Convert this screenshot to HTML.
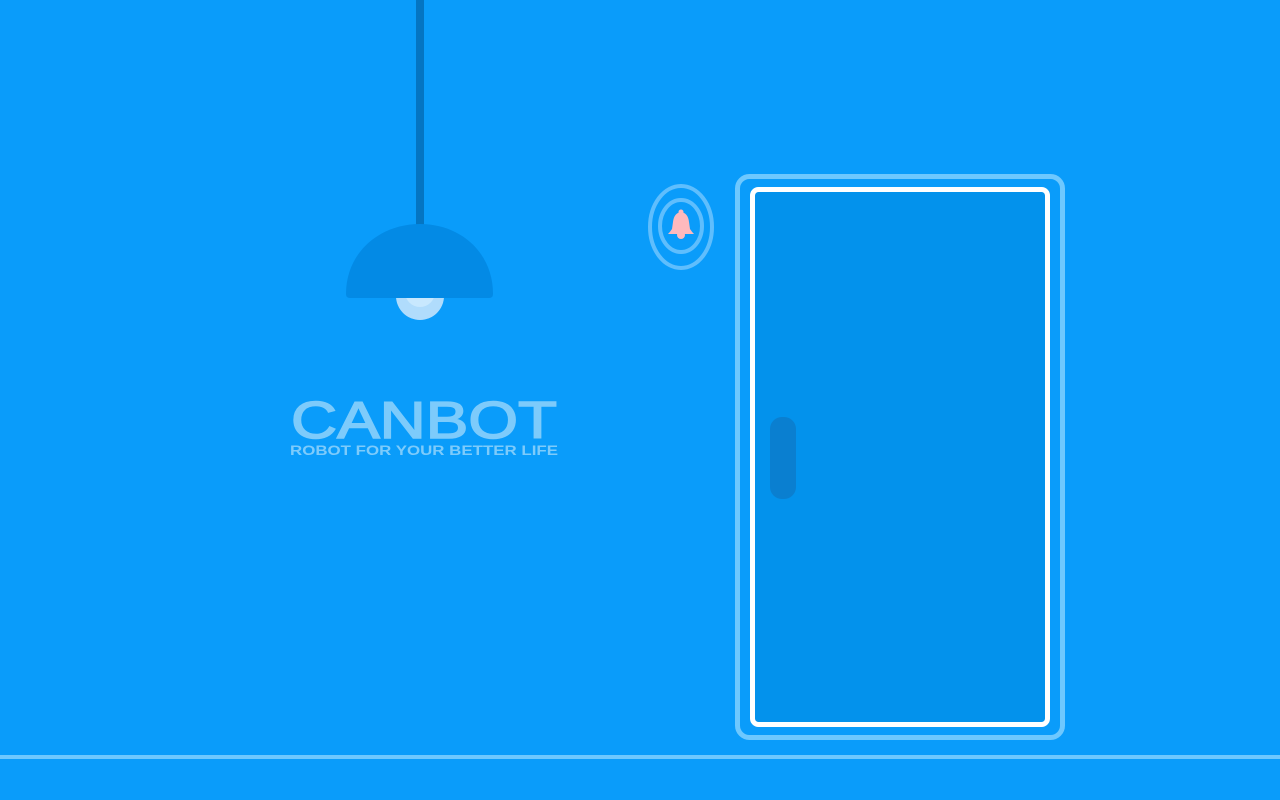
<!DOCTYPE html>
<html><head><meta charset="utf-8"><style>
html,body{margin:0;padding:0;width:1280px;height:800px;overflow:hidden;background:#0a9cfa;}
</style></head><body>
<svg width="1280" height="800" viewBox="0 0 1280 800" xmlns="http://www.w3.org/2000/svg" style="position:absolute;left:0;top:0">
<rect width="1280" height="800" fill="#0a9cfa"/>
<rect x="416" y="0" width="8" height="228" fill="#0475c2"/>
<circle cx="420" cy="296" r="24" fill="#b0dcfc"/>
<circle cx="420" cy="292" r="15" fill="#c8e8fe"/>
<path d="M346 294 C346 252 380 224 420 224 C460 224 493 252 493 294 Q493 298 489 298 L350 298 Q346 298 346 294 Z" fill="#038ae5"/>
<ellipse cx="681" cy="227" rx="31" ry="41" fill="none" stroke="#5fbefd" stroke-width="4"/>
<ellipse cx="681" cy="226" rx="21" ry="26" fill="none" stroke="#5fbefd" stroke-width="4"/>
<path d="M681 212 Q674 213 673 222 L672 229 Q670 232 668 234 L694 234 Q692 232 690 229 L689 222 Q688 213 681 212 Z" fill="#feb9bd"/>
<circle cx="681" cy="235" r="4" fill="#feb9bd"/>
<circle cx="681" cy="212" r="2.5" fill="#feb9bd"/>
<rect x="737.5" y="176.5" width="325" height="561" rx="12" fill="none" stroke="#6ec8fe" stroke-width="5"/>
<rect x="752.5" y="189.5" width="295" height="535" rx="6" fill="#0392ec" stroke="#ffffff" stroke-width="5"/>
<rect x="770" y="417" width="26" height="82" rx="12" fill="#0a7fd0"/>
<rect x="0" y="755" width="1280" height="4" fill="#6ec8fe"/>
<text x="424" y="438" text-anchor="middle" font-family="Liberation Sans, sans-serif" font-size="52" fill="#7dcbfb" stroke="#7dcbfb" stroke-width="1.5" textLength="266" lengthAdjust="spacingAndGlyphs">CANBOT</text>
<text x="424" y="455" text-anchor="middle" font-family="Liberation Sans, sans-serif" font-weight="bold" font-size="13.5" fill="#7dcbfb" textLength="268" lengthAdjust="spacingAndGlyphs">ROBOT FOR YOUR BETTER LIFE</text>
</svg>
</body></html>
